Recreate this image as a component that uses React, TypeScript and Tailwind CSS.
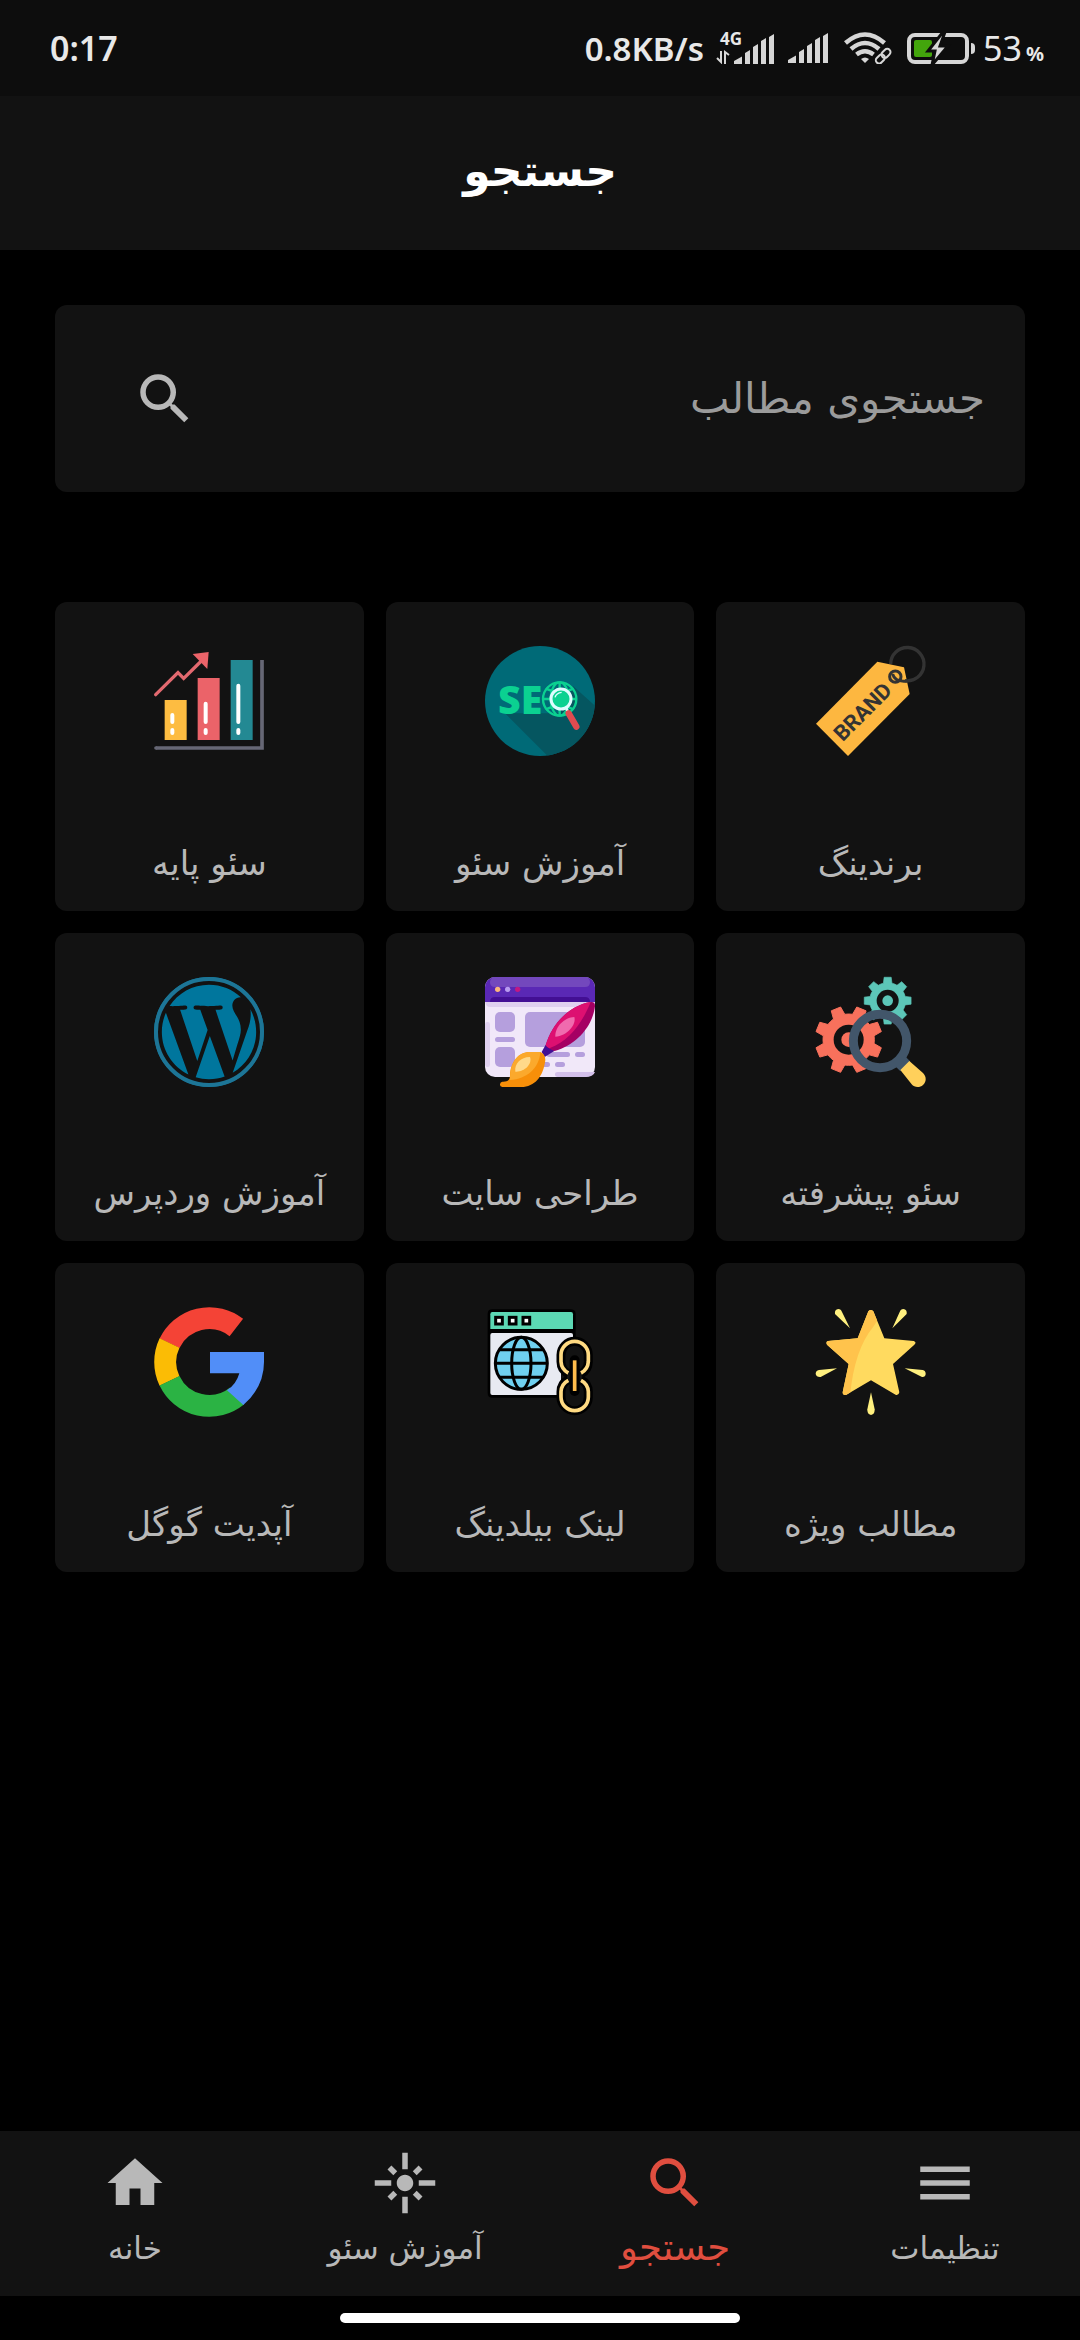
import type { ReactNode } from "react";
import { MdFlare, MdHome, MdMenu, MdSearch } from "react-icons/md";
import { FaWordpress } from "react-icons/fa";

function gearPath(cx: number, cy: number, outer: number, root: number, teeth: number, start: number, topHalf: number, baseHalf: number) {
  const step = (Math.PI * 2) / teeth;
  const at = (r: number, a: number) => `${(cx + r * Math.cos(a)).toFixed(1)} ${(cy + r * Math.sin(a)).toFixed(1)}`;
  let d = "";
  for (let i = 0; i < teeth; i++) {
    const a = start + i * step;
    d += `${i === 0 ? "M" : "L"}${at(root, a - baseHalf)}L${at(outer, a - topHalf)}L${at(outer, a + topHalf)}L${at(root, a + baseHalf)}`;
    d += `A${root} ${root} 0 0 1 ${at(root, a + step - baseHalf)}`;
  }
  return d + "Z";
}

function Art({ box, children }: { box: string; children: ReactNode }) {
  return (
    <svg viewBox={box} direction="ltr" className="size-[110px] overflow-visible" aria-hidden="true">
      {children}
    </svg>
  );
}

function BrandIcon() {
  return (
    <Art box="316 138 330 330">
      <path d="M500 185L580 202L597 282L412 468L316 371Z" fill="#fdb740" />
      <path d="M540 192A50 50 0 1 1 583 242" fill="none" stroke="#333" strokeWidth="10" />
      <circle cx="554" cy="230" r="17" fill="none" stroke="#333" strokeWidth="9" />
      <path d="M546 222C550 238 564 246 590 243" fill="none" stroke="#333" strokeWidth="9" />
      <text x="396" y="427" transform="rotate(-45 396 427)" fontSize="65" fontWeight="700" fill="#333" className="font-['Roboto',sans-serif]">
        BRAND
      </text>
    </Art>
  );
}

function SeoIcon() {
  return (
    <Art box="316 138 330 330">
      <clipPath id="seo-disc">
        <circle cx="481" cy="303" r="165" />
      </clipPath>
      <circle cx="481" cy="303" r="165" fill="#006a77" />
      <path clipPath="url(#seo-disc)" d="M376 340L516 480L660 460V330L580 258L540 340Z" fill="#055660" />
      <text x="355" y="341" fontSize="118" fontWeight="800" fill="#0bd191" className="font-['Open_Sans',sans-serif]">
        SE
      </text>
      <g fill="none" stroke="#0bd191" strokeWidth="7">
        <circle cx="540" cy="297" r="50" />
        <ellipse cx="540" cy="297" rx="27" ry="50" />
        <path d="M490 297H590M498 266Q540 286 582 266M498 328Q540 308 582 328M540 247V347" />
      </g>
      <path d="M560 325L568 340" stroke="#dff" strokeWidth="8" />
      <path d="M567 340L590 380" stroke="#e04b50" strokeWidth="19" strokeLinecap="round" />
      <circle cx="544" cy="297" r="30" fill="#0bd191" stroke="#dffcff" strokeWidth="9" />
      <path d="M526 292Q530 279 546 277" fill="none" stroke="#dffcff" strokeWidth="4" />
    </Art>
  );
}

function ChartIcon() {
  return (
    <Art box="313 138 330 330">
      <rect x="345" y="300" width="66" height="120" fill="#fdbc41" />
      <rect x="444" y="234" width="66" height="186" fill="#eb6369" />
      <rect x="543" y="180" width="66" height="240" fill="#238993" />
      <g stroke="#fff" strokeWidth="12" strokeLinecap="round">
        <path d="M368 345V366M368 390V399M468 311V366M468 390V399M566 257V366M566 390V399" />
      </g>
      <path d="M319 444H637V180" fill="none" stroke="#666775" strokeWidth="11" />
      <circle cx="319" cy="444" r="5.5" fill="#666775" />
      <path d="M318 284L385 218L402 235L458 180" fill="none" stroke="#e2696f" strokeWidth="10" strokeLinecap="round" />
      <path d="M429 162L477 156L473 207Z" fill="#eb6369" />
    </Art>
  );
}

function GearsIcon() {
  return (
    <Art box="316 141 330 330">
      <path d={gearPath(414, 329, 101, 77, 8, Math.PI / 8, 0.15, 0.24)} fill="#f8715c" stroke="#f8715c" strokeWidth="3" strokeLinejoin="round" />
      <circle cx="414" cy="329" r="45" fill="#121212" />
      <circle cx="414" cy="329" r="22" fill="#f8715c" />
      <path d={gearPath(531, 212, 71, 54, 8, 0, 0.15, 0.24)} fill="#5cc6b8" stroke="#5cc6b8" strokeWidth="2" strokeLinejoin="round" />
      <circle cx="531" cy="212" r="33" fill="#121212" />
      <circle cx="531" cy="212" r="16" fill="#5cc6b8" />
      <path d="M560 385L584 409" stroke="#42566a" strokeWidth="42" />
      <circle cx="508" cy="333" r="80" fill="none" stroke="#42566a" strokeWidth="27" />
      <path d="M569 420L596 393L637 429C648 440 648 456 637 465C627 474 611 473 603 463Z" fill="#ffd05b" />
    </Art>
  );
}

function DesignIcon() {
  return (
    <Art box="315 141 330 330">
      <rect x="315" y="141" width="330" height="300" rx="30" fill="#f1e8f9" />
      <path d="M315 216V171A30 30 0 0 1 345 141H615A30 30 0 0 1 645 171V216Z" fill="#5a28b5" />
      <path d="M330 156Q332 141 346 141H614Q629 141 630 156Q630 171 615 171H345Q330 171 330 156Z" fill="#7348bd" />
      <path d="M330 216Q330 201 345 201H615Q630 201 630 216Z" fill="#430f94" />
      <path d="M315 216H645V231H330Q318 231 315 216Z" fill="#dfd0ef" />
      <rect x="315" y="276" width="15" height="135" rx="7" fill="#dfd0ef" />
      <path d="M533 426H645Q640 441 615 441H533Q525 441 525 433Q525 426 533 426Z" fill="#d3c0ea" />
      <circle cx="353" cy="178" r="8" fill="#fbb67c" />
      <circle cx="383" cy="178" r="8" fill="#b99cf0" />
      <circle cx="413" cy="178" r="8" fill="#c11884" />
      <g fill="#b59fdd">
        <rect x="345" y="246" width="60" height="60" rx="15" />
        <rect x="345" y="321" width="60" height="15" rx="7.5" />
        <rect x="345" y="351" width="60" height="60" rx="15" />
        <rect x="435" y="246" width="180" height="105" rx="15" />
        <rect x="500" y="366" width="70" height="15" rx="7.5" />
        <rect x="585" y="366" width="30" height="15" rx="7.5" />
        <rect x="470" y="396" width="40" height="15" rx="7.5" />
        <rect x="525" y="396" width="30" height="15" rx="7.5" />
      </g>
      <path d="M485 366L497 344L524 362L494 381Z" fill="#430f94" />
      <path d="M497 346C515 282 568 226 632 216Q645 214 645 228C638 290 588 345 524 363Q508 359 497 346Z" fill="#a50063" />
      <path d="M497 346C515 282 568 226 632 216C606 280 570 330 508 355Q501 352 497 346Z" fill="#dd1071" />
      <path d="M526 320C524 290 554 262 583 261C590 285 560 318 526 320Z" fill="#f06bae" />
      <path d="M367 455C385 456 390 448 390 435C392 396 415 366 450 366H481Q496 372 496 390C490 440 464 471 424 471H367Q359 469 360 463Q361 456 367 455Z" fill="#f78f09" />
      <path d="M390 450C388 396 415 366 450 366H481C478 415 440 447 390 450Z" fill="#fba92c" />
      <path d="M406 425C402 400 425 380 450 381C458 402 432 427 406 425Z" fill="#ffd98a" />
    </Art>
  );
}

function WordpressIcon() {
  return (
    <Art box="312 141 330 330">
      <FaWordpress x="306.7" y="135.7" size={340.6} color="#00769d" />
      <circle cx="477" cy="306" r="159" fill="none" stroke="#1d7596" strokeWidth="12" />
    </Art>
  );
}

function StarIcon() {
  const star =
    "M473 154Q480 146 488 154L521 235L609 243Q619 247 611 254L547 312L566 397Q564 407 556 405L481 361L406 405Q396 407 396 397L414 312L349 254Q344 246 352 243L441 235Z";
  return (
    <Art box="316 141 330 330">
      <clipPath id="star-shape">
        <path d={star} />
      </clipPath>
      <path d={star} fill="#ffda5f" />
      <path clipPath="url(#star-shape)" d="M340 140H520Q504 178 488 200Q430 270 418 410H340Z" fill="#ffc34c" />
      <g fill="#fff07f">
        <path d="M373 162Q371 148 383 147Q391 147 394 156L418 205Q398 186 373 162Z" />
        <path d="M588 162Q590 148 578 147Q570 147 567 156L545 205Q564 186 588 162Z" />
        <path d="M379 325L330 351Q317 352 315 342Q315 332 325 330Z" />
        <path d="M582 325L634 351Q644 352 645 342Q645 332 636 330Z" />
        <path d="M481 397L492 448Q493 463 481 465Q469 463 470 448Z" />
      </g>
    </Art>
  );
}

function LinkIcon() {
  return (
    <Art box="0 0 330 330">
      <path d="M22 7H254Q272 7 272 20V272H20Q8 272 8 258V20Q8 7 22 7Z" fill="#000" />
      <rect x="16" y="78" width="248" height="186" rx="6" fill="#e8eaf2" />
      <path d="M22 15H258Q264 15 264 22V66H16V22Q16 15 22 15Z" fill="#5cd8b4" />
      <g fill="#fff" stroke="#000" strokeWidth="9">
        <rect x="32" y="31" width="20" height="20" />
        <rect x="73" y="31" width="20" height="20" />
        <rect x="114" y="31" width="20" height="20" />
      </g>
      <circle cx="109" cy="169" r="78" fill="#6fd0f0" />
      <g fill="none" stroke="#000" strokeWidth="9">
        <circle cx="109" cy="169" r="78" />
        <ellipse cx="109" cy="169" rx="29" ry="78" />
        <path d="M31 169H187M42 128H176M42 211H176" />
      </g>
      <rect x="228" y="103" width="82" height="208" rx="41" fill="#121212" />
      <path d="M250 200A41 41 0 0 1 228 164V144A41 41 0 0 1 310 144V164A41 41 0 0 1 288 200" fill="none" stroke="#000" strokeWidth="27" />
      <path d="M250 218A41 41 0 0 0 228 254V270A41 41 0 0 0 310 270V254A41 41 0 0 0 288 218" fill="none" stroke="#000" strokeWidth="27" />
      <path d="M269 160V252" stroke="#000" strokeWidth="30" strokeLinecap="round" />
      <path d="M250 198A41 41 0 0 1 228 164V144A41 41 0 0 1 310 144V164A41 41 0 0 1 288 198" fill="none" stroke="#ffda82" strokeWidth="11" />
      <path d="M250 220A41 41 0 0 0 228 254V270A41 41 0 0 0 310 270V254A41 41 0 0 0 288 220" fill="none" stroke="#ffda82" strokeWidth="11" />
      <path d="M269 160V252" stroke="#fdbb4c" strokeWidth="11" />
    </Art>
  );
}

function GoogleIcon() {
  return (
    <Art box="0 0 330 330">
      <g fill="none" strokeWidth="66">
        <path d="M247 61.500A132 132 0 0 0 46.600 109" stroke="#f44336" />
        <path d="M46.600 108A132 132 0 0 0 46.600 222" stroke="#fbbc05" />
        <path d="M46.600 221A132 132 0 0 0 249 267" stroke="#2bb344" />
      </g>
      <path d="M168 135H330V165Q330 240 268 294L219 250Q247 232 256 199H168Z" fill="#518ef8" />
    </Art>
  );
}

const topics: { label: string; icon: ReactNode }[] = [
  { label: "برندینگ", icon: <BrandIcon /> },
  { label: "آموزش سئو", icon: <SeoIcon /> },
  { label: "سئو پایه", icon: <ChartIcon /> },
  { label: "سئو پیشرفته", icon: <GearsIcon /> },
  { label: "طراحی سایت", icon: <DesignIcon /> },
  { label: "آموزش وردپرس", icon: <WordpressIcon /> },
  { label: "مطالب ویژه", icon: <StarIcon /> },
  { label: "لینک بیلدینگ", icon: <LinkIcon /> },
  { label: "آپدیت گوگل", icon: <GoogleIcon /> },
];

const tabs = [
  { label: "تنظیمات", Icon: MdMenu, active: false },
  { label: "جستجو", Icon: MdSearch, active: true },
  { label: "آموزش سئو", Icon: MdFlare, active: false },
  { label: "خانه", Icon: MdHome, active: false },
];

function SignalBars() {
  return (
    <svg viewBox="0 0 40 30" className="h-[30px] w-10" fill="#d6d6d6" aria-hidden="true">
      <path d="M0 30V27L8 22.500V30ZM11 30V19L16 16V30ZM19 30V13L24 10V30ZM27 30V7L32 4V30ZM35 30V3L40 0V30Z" />
    </svg>
  );
}

function StatusBar() {
  return (
    <div dir="ltr" className="flex h-24 items-center justify-between bg-[#0d0d0d] pr-9 pl-[50px] font-['Noto_Sans',sans-serif] text-[34px] leading-none font-semibold text-[#e8e8e8]">
      <span>0:17</span>
      <div className="flex items-center">
        <span className="mr-3 text-[33px]">0.8KB/s</span>
        <div className="mr-[14px] flex items-end">
          <div className="flex flex-col gap-1">
            <span className="-mr-4 pl-1 text-[17px] leading-[14px] font-bold">4G</span>
            <svg viewBox="0 0 14 14" className="h-[14px] w-[14px]" fill="none" stroke="#d6d6d6" strokeWidth="2" aria-hidden="true">
              <path d="M5 1V12L1 8M9 14V2L13 5" />
            </svg>
          </div>
          <span className="ml-1">
            <SignalBars />
          </span>
        </div>
        <SignalBars />
        <svg viewBox="0 0 48 32" className="ml-4 h-8 w-12" fill="none" stroke="#d6d6d6" aria-hidden="true">
          <path d="M1.500 11Q21 -6 40.500 11M7 17Q21 5 35 17M12.500 22.500Q21 16 29.500 22.500" strokeWidth="4.500" />
          <path d="M17 27Q21 24 25 27L21 31Z" fill="#d6d6d6" stroke="none" />
          <g strokeWidth="2" transform="rotate(-45 39 24)">
            <rect x="30" y="21" width="10" height="6.500" rx="3.200" />
            <rect x="38" y="21" width="10" height="6.500" rx="3.200" />
          </g>
        </svg>
        <svg viewBox="0 0 68 32" className="ml-[15px] h-8 w-[68px]" aria-hidden="true">
          <rect x="2" y="3" width="58" height="27" rx="6" fill="none" stroke="#d6d6d6" strokeWidth="4" />
          <path d="M64 11Q68 11 68 15V18Q68 22 64 22Z" fill="#d6d6d6" />
          <rect x="7" y="8" width="18" height="17" rx="2" fill="#43a50c" />
          <path d="M36 0L21 19H28L25 33L41 14H33L38 0Z" fill="#d6d6d6" stroke="#0d0d0d" strokeWidth="3" />
        </svg>
        <span className="ml-2 flex items-baseline gap-1 font-normal">
          53<span className="text-[20px] font-bold">%</span>
        </span>
      </div>
    </div>
  );
}

export default function App() {
  return (
    <div dir="rtl" className="flex min-h-screen flex-col bg-black font-['DejaVu_Sans',sans-serif] text-[#b8b8b8]">
      <StatusBar />
      <header className="flex h-[154px] items-center justify-center bg-[#121212] pb-1">
        <h1 className="text-[44px] leading-none font-bold text-white">جستجو</h1>
      </header>

      <main className="flex flex-1 flex-col gap-[110px] px-[55px] pt-[55px]">
        <form className="flex h-[187px] items-center rounded-xl bg-[#121212] pr-10 pl-[77px]" onSubmit={(e) => e.preventDefault()}>
          <input
            type="search"
            aria-label="جستجوی مطالب"
            placeholder="جستجوی مطالب"
            className="h-20 min-w-0 flex-1 bg-transparent text-[42px] outline-none placeholder:text-[#9b9b9b]"
          />
          <button type="submit" aria-label="جستجو">
            <MdSearch className="size-[66px]" />
          </button>
        </form>

        <div className="grid grid-cols-3 gap-[22px]">
          {topics.map((t) => (
            <button key={t.label} type="button" className="flex aspect-square flex-col items-center justify-between rounded-xl bg-[#121212] pt-11 pb-6">
              {t.icon}
              <span className="text-[34px] leading-[48px] whitespace-nowrap">{t.label}</span>
            </button>
          ))}
        </div>
      </main>

      <nav className="grid h-[165px] grid-cols-4 bg-[#121212]">
        {tabs.map(({ label, Icon, active }) => (
          <a
            key={label}
            href="#"
            aria-current={active ? "page" : undefined}
            className={active ? "flex flex-col items-center pt-[19px] text-[#e04e3f]" : "flex flex-col items-center pt-[19px]"}
          >
            <Icon className="size-[66px]" />
            <span className={active ? "text-[37px] leading-[64px]" : "text-[31px] leading-[64px]"}>{label}</span>
          </a>
        ))}
      </nav>
      <div className="flex h-11 items-center justify-center">
        <div className="h-[10px] w-[400px] rounded-full bg-white" />
      </div>
    </div>
  );
}
